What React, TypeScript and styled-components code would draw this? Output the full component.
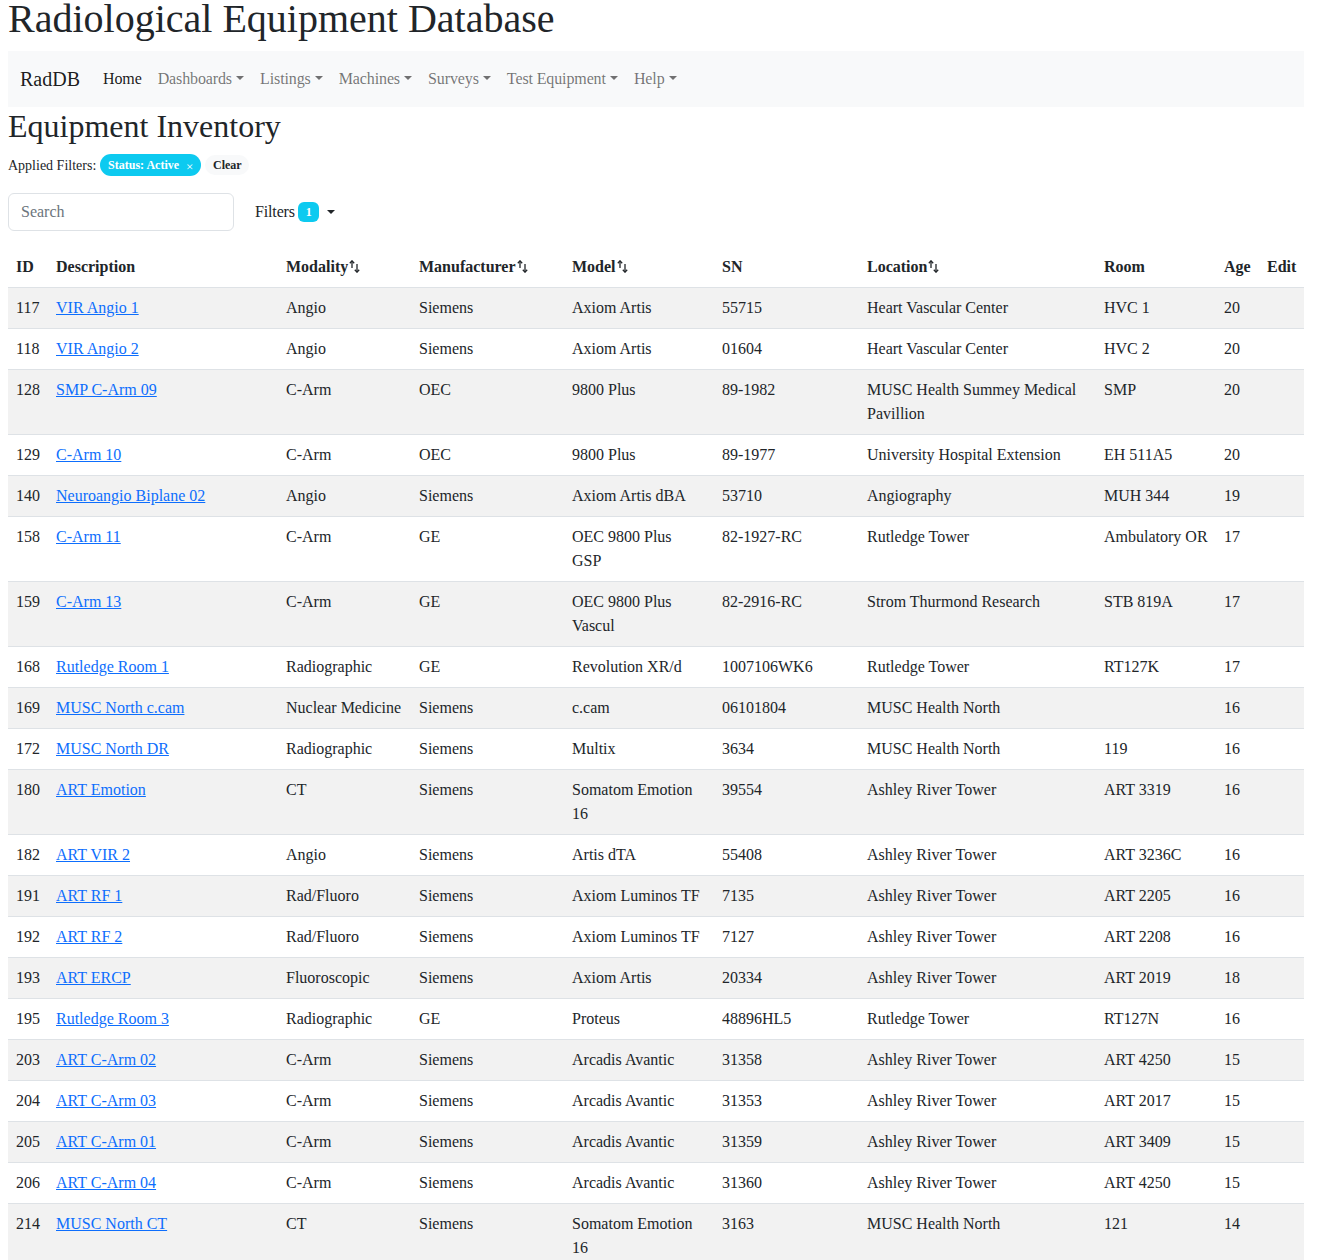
import React from "react";
import styled, { createGlobalStyle } from "styled-components";

const GlobalStyle = createGlobalStyle`
  *, *::before, *::after { box-sizing: border-box; }
  body {
    margin: 0;
    font-family: "Liberation Serif", "Times New Roman", serif;
    font-size: 16px;
    line-height: 1.5;
    color: #212529;
    background: #fff;
  }
`;

const Page = styled.div`
  width: 1296px;
  margin-left: 8px;
`;

const Title = styled.h1`
  font-size: 40px;
  font-weight: 500;
  line-height: 1.2;
  margin: -5px 0 8px 0;
`;

const NavBar = styled.nav`
  background: #f8f9fa;
  padding: 8px 12px;
  display: flex;
  align-items: center;
`;

const Brand = styled.span`
  font-size: 20px;
  line-height: 30px;
  padding: 5px 0;
  margin-right: 15px;
  color: rgba(0, 0, 0, 0.9);
`;

const NavLink = styled.span<{ $active?: boolean }>`
  padding: 8px;
  line-height: 24px;
  letter-spacing: -0.12px;
  color: ${(p) => (p.$active ? "rgba(0,0,0,0.9)" : "rgba(0,0,0,0.55)")};
  white-space: nowrap;
`;

const Caret = styled.span`
  display: inline-block;
  margin-left: 0.255em;
  vertical-align: 0.255em;
  border-top: 0.3em solid;
  border-right: 0.3em solid transparent;
  border-left: 0.3em solid transparent;
`;

const Heading = styled.h2`
  font-size: 32px;
  font-weight: 500;
  line-height: 1.2;
  margin: 0 0 9px 0;
`;

const FilterRow = styled.div`
  display: flex;
  align-items: center;
  gap: 4px;
  font-size: 14px;
  line-height: 21px;
`;

const Badge = styled.span<{ $variant: "info" | "light"; $pill?: boolean }>`
  display: inline-flex;
  align-items: center;
  padding: 4.2px 7.8px;
  font-size: 12px;
  font-weight: 700;
  line-height: 1;
  border-radius: ${(p) => (p.$pill ? "50rem" : "6px")};
  background: ${(p) => (p.$variant === "info" ? "#0dcaf0" : "#f8f9fa")};
  color: ${(p) => (p.$variant === "info" ? "#fff" : "#212529")};
  white-space: nowrap;
`;

const CloseX = styled.span`
  margin-left: 7px;
  font-size: 13px;
  font-weight: 400;
  line-height: 1;
  position: relative;
  top: 1px;
`;

const ControlRow = styled.div`
  display: flex;
  align-items: center;
  margin-top: 17px;
  gap: 9px;
`;

const SearchInput = styled.input`
  width: 226px;
  height: 38px;
  padding: 6px 12px;
  font-family: inherit;
  font-size: 16px;
  color: #212529;
  border: 1px solid #dee2e6;
  border-radius: 6px;
  outline: none;
  &::placeholder { color: #6c757d; }
`;

const FilterButton = styled.button`
  display: inline-flex;
  align-items: center;
  background: transparent;
  border: 1px solid transparent;
  padding: 6px 12px 6px 11px;
  font-family: inherit;
  font-size: 16px;
  line-height: 24px;
  letter-spacing: -0.15px;
  color: #212529;
`;

const CountBadge = styled.span`
  display: inline-block;
  margin-left: 3px;
  background: #0dcaf0;
  color: #fff;
  font-size: 12px;
  font-weight: 700;
  line-height: 1;
  padding: 4.2px 7.8px;
  border-radius: 6px;
  letter-spacing: 0;
`;

const ButtonCaret = styled(Caret)`
  margin-left: 8px;
`;

const Table = styled.table`
  width: 1296px;
  margin-top: 16px;
  border-collapse: collapse;
  table-layout: fixed;
`;

const Th = styled.th`
  text-align: left;
  font-weight: 700;
  padding: 8px;
  vertical-align: bottom;
  border-bottom: 1px solid #dee2e6;
  white-space: nowrap;
`;

const Tr = styled.tr<{ $striped: boolean }>`
  background: ${(p) => (p.$striped ? "#f2f2f2" : "#fff")};
`;

const Td = styled.td<{ $tight?: boolean }>`
  padding: ${(p) => (p.$tight ? "8px 12px 8px 8px" : "8px")};
  vertical-align: top;
  border-bottom: 1px solid #dee2e6;
`;

const Link = styled.a`
  color: #0d6efd;
  text-decoration: underline;
`;

const SortIcon = () => (
  <svg width="11" height="13" viewBox="0 0 11 13" style={{ marginLeft: 1, verticalAlign: -1 }}>
    <path d="M3 1 L3 8" stroke="#212529" strokeWidth="1.3" fill="none" />
    <path d="M0.8 3.2 L3 0.8 L5.2 3.2" stroke="#212529" strokeWidth="1.3" fill="none" />
    <path d="M8 4 L8 12" stroke="#212529" strokeWidth="1.3" fill="none" />
    <path d="M5.8 9.8 L8 12.2 L10.2 9.8" stroke="#212529" strokeWidth="1.3" fill="none" />
  </svg>
);

const widths = [40, 230, 133, 153, 150, 145, 237, 120, 43, 45];

type Row = [string, string, string, string, string, string, string, string, string];

const rows: Row[] = [
  ["117", "VIR Angio 1", "Angio", "Siemens", "Axiom Artis", "55715", "Heart Vascular Center", "HVC 1", "20"],
  ["118", "VIR Angio 2", "Angio", "Siemens", "Axiom Artis", "01604", "Heart Vascular Center", "HVC 2", "20"],
  ["128", "SMP C-Arm 09", "C-Arm", "OEC", "9800 Plus", "89-1982", "MUSC Health Summey Medical Pavillion", "SMP", "20"],
  ["129", "C-Arm 10", "C-Arm", "OEC", "9800 Plus", "89-1977", "University Hospital Extension", "EH 511A5", "20"],
  ["140", "Neuroangio Biplane 02", "Angio", "Siemens", "Axiom Artis dBA", "53710", "Angiography", "MUH 344", "19"],
  ["158", "C-Arm 11", "C-Arm", "GE", "OEC 9800 Plus GSP", "82-1927-RC", "Rutledge Tower", "Ambulatory OR", "17"],
  ["159", "C-Arm 13", "C-Arm", "GE", "OEC 9800 Plus Vascul", "82-2916-RC", "Strom Thurmond Research", "STB 819A", "17"],
  ["168", "Rutledge Room 1", "Radiographic", "GE", "Revolution XR/d", "1007106WK6", "Rutledge Tower", "RT127K", "17"],
  ["169", "MUSC North c.cam", "Nuclear Medicine", "Siemens", "c.cam", "06101804", "MUSC Health North", "", "16"],
  ["172", "MUSC North DR", "Radiographic", "Siemens", "Multix", "3634", "MUSC Health North", "119", "16"],
  ["180", "ART Emotion", "CT", "Siemens", "Somatom Emotion 16", "39554", "Ashley River Tower", "ART 3319", "16"],
  ["182", "ART VIR 2", "Angio", "Siemens", "Artis dTA", "55408", "Ashley River Tower", "ART 3236C", "16"],
  ["191", "ART RF 1", "Rad/Fluoro", "Siemens", "Axiom Luminos TF", "7135", "Ashley River Tower", "ART 2205", "16"],
  ["192", "ART RF 2", "Rad/Fluoro", "Siemens", "Axiom Luminos TF", "7127", "Ashley River Tower", "ART 2208", "16"],
  ["193", "ART ERCP", "Fluoroscopic", "Siemens", "Axiom Artis", "20334", "Ashley River Tower", "ART 2019", "18"],
  ["195", "Rutledge Room 3", "Radiographic", "GE", "Proteus", "48896HL5", "Rutledge Tower", "RT127N", "16"],
  ["203", "ART C-Arm 02", "C-Arm", "Siemens", "Arcadis Avantic", "31358", "Ashley River Tower", "ART 4250", "15"],
  ["204", "ART C-Arm 03", "C-Arm", "Siemens", "Arcadis Avantic", "31353", "Ashley River Tower", "ART 2017", "15"],
  ["205", "ART C-Arm 01", "C-Arm", "Siemens", "Arcadis Avantic", "31359", "Ashley River Tower", "ART 3409", "15"],
  ["206", "ART C-Arm 04", "C-Arm", "Siemens", "Arcadis Avantic", "31360", "Ashley River Tower", "ART 4250", "15"],
  ["214", "MUSC North CT", "CT", "Siemens", "Somatom Emotion 16", "3163", "MUSC Health North", "121", "14"],
];

const headers: { label: string; sort?: boolean }[] = [
  { label: "ID" },
  { label: "Description" },
  { label: "Modality", sort: true },
  { label: "Manufacturer", sort: true },
  { label: "Model", sort: true },
  { label: "SN" },
  { label: "Location", sort: true },
  { label: "Room" },
  { label: "Age" },
  { label: "Edit" },
];

const navItems = ["Dashboards", "Listings", "Machines", "Surveys", "Test Equipment", "Help"];

export default function App() {
  return (
    <Page>
      <GlobalStyle />
      <Title>Radiological Equipment Database</Title>
      <NavBar>
        <Brand>RadDB</Brand>
        <NavLink $active>Home</NavLink>
        {navItems.map((n) => (
          <NavLink key={n}>
            {n}
            <Caret />
          </NavLink>
        ))}
      </NavBar>
      <Heading>Equipment Inventory</Heading>
      <FilterRow>
        <span>Applied Filters:</span>
        <Badge $variant="info" $pill>
          Status: Active<CloseX>×</CloseX>
        </Badge>
        <Badge $variant="light" $pill>Clear</Badge>
      </FilterRow>
      <ControlRow>
        <SearchInput placeholder="Search" />
        <FilterButton>
          Filters<CountBadge>1</CountBadge>
          <ButtonCaret />
        </FilterButton>
      </ControlRow>
      <Table>
        <colgroup>
          {widths.map((w, i) => (
            <col key={i} style={{ width: w }} />
          ))}
        </colgroup>
        <thead>
          <tr>
            {headers.map((h) => (
              <Th key={h.label}>
                {h.label}
                {h.sort && <SortIcon />}
              </Th>
            ))}
          </tr>
        </thead>
        <tbody>
          {rows.map((r, i) => (
            <Tr key={r[0]} $striped={i % 2 === 0}>
              <Td>{r[0]}</Td>
              <Td>
                <Link href="#">{r[1]}</Link>
              </Td>
              <Td>{r[2]}</Td>
              <Td>{r[3]}</Td>
              <Td $tight>{r[4]}</Td>
              <Td>{r[5]}</Td>
              <Td>{r[6]}</Td>
              <Td>{r[7]}</Td>
              <Td>{r[8]}</Td>
              <Td></Td>
            </Tr>
          ))}
        </tbody>
      </Table>
    </Page>
  );
}
